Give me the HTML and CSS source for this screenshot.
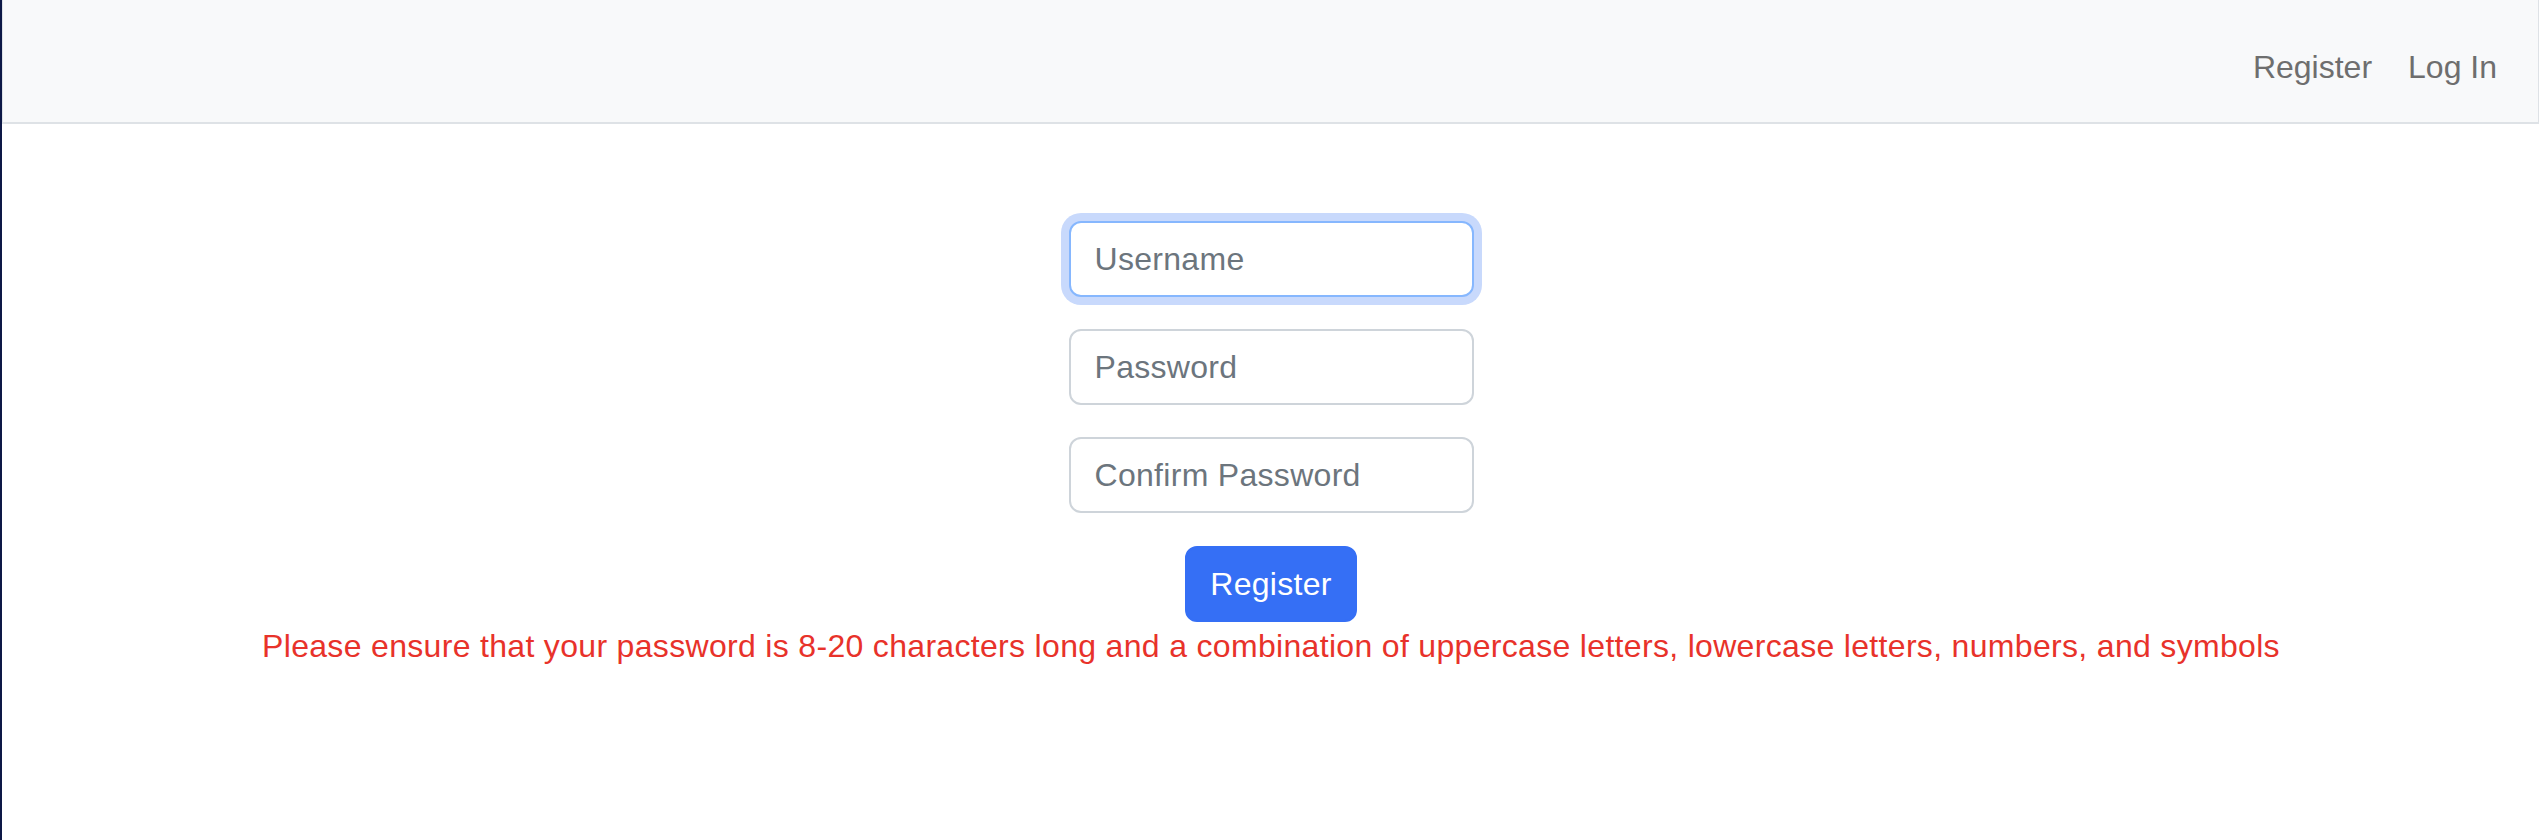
FILE: index.html
```html
<!DOCTYPE html>
<html lang="en">
<head>
<meta charset="utf-8">
<title>Register</title>
<link rel="stylesheet" href="styles.css">
</head>
<body>
<div class="page">
  <nav class="navbar">
    <ul class="nav-links">
      <li><a href="#" class="nav-link">Register</a></li>
      <li><a href="#" class="nav-link">Log In</a></li>
    </ul>
  </nav>
  <main class="content">
    <form class="register-form">
      <input class="form-control focused" type="text" placeholder="Username">
      <input class="form-control" type="password" placeholder="Password">
      <input class="form-control" type="password" placeholder="Confirm Password">
      <button type="button" class="btn-primary">Register</button>
      <p class="error">Please ensure that your password is 8-20 characters long and a combination of uppercase letters, lowercase letters, numbers, and symbols</p>
    </form>
  </main>
</div>
</body>
</html>
```

FILE: styles.css
```css
* { box-sizing: border-box; }

html, body {
  margin: 0;
  padding: 0;
  height: 100%;
  background: #ffffff;
}

body {
  font-family: "Liberation Sans", Arial, sans-serif;
  border-left: 2px solid #0d1846;
}

.page {
  min-height: 100%;
}

.navbar {
  height: 124px;
  background: #f8f9fa;
  border-left: 1px solid #dee2e6;
  border-right: 1px solid #dee2e6;
  border-bottom: 2px solid #dee2e6;
  display: flex;
  justify-content: flex-end;
  align-items: center;
  padding: 12px 41px 0 0;
  margin-right: 1px;
}

.nav-links {
  list-style: none;
  margin: 0;
  padding: 0;
  display: flex;
  gap: 36px;
}

.nav-link {
  font-size: 32px;
  color: #6e6e6e;
  text-decoration: none;
}

.content {
  padding-top: 97px;
}

.register-form {
  display: flex;
  flex-direction: column;
  align-items: center;
}

.form-control {
  width: 405px;
  height: 76px;
  padding: 12px 24px;
  font-family: inherit;
  font-size: 32px;
  line-height: 48px;
  color: #212529;
  background: #ffffff;
  border: 2px solid #ced4da;
  border-radius: 12px;
  margin: 0 0 32px 0;
  outline: none;
  letter-spacing: 0.3px;
}

.form-control::placeholder {
  color: #6c757d;
  opacity: 1;
}

.form-control.focused {
  border-color: #86b7fe;
  box-shadow: 0 0 0 8px #c8d9fc;
}

.btn-primary {
  width: 172px;
  height: 76px;
  margin-top: 1px;
  padding: 12px 20px;
  font-family: inherit;
  font-size: 32px;
  line-height: 48px;
  color: #ffffff;
  background: #356ff5;
  border: 2px solid #356ff5;
  border-radius: 12px;
  letter-spacing: 0.3px;
}

.error {
  margin: 0;
  font-size: 32px;
  line-height: 48px;
  color: #e8322a;
  text-align: center;
  letter-spacing: 0.32px;
}
```
